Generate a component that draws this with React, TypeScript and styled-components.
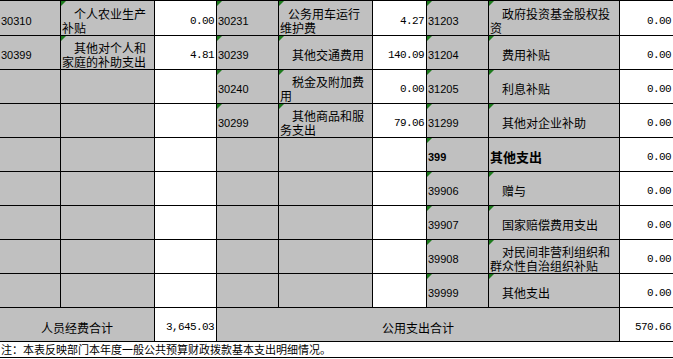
import React from 'react';
import styled, { createGlobalStyle, css } from 'styled-components';

const GlobalStyle = createGlobalStyle`
  html, body { margin: 0; padding: 0; background: #ffffff; }
  body { font-family: "Noto Sans CJK SC", sans-serif; color: #000; }
`;

const Sheet = styled.div`
  display: grid;
  grid-template-columns: 60px 93px 61px 61px 93px 53px 61px 130px 53px;
  grid-template-rows: 34px repeat(9, 33px) 15px;
  gap: 1px;
  padding: 1px 0;
  background: #000;
  width: 673px;
  overflow: hidden;
`;

const flagStyle = css`
  &::before {
    content: '';
    position: absolute;
    left: 0;
    top: 0;
    border-top: 5px solid #1d7a1d;
    border-right: 5px solid transparent;
  }
`;

const Cell = styled.div<{ $flag?: boolean }>`
  position: relative;
  box-sizing: border-box;
  display: flex;
  align-items: center;
  padding-top: 5px;
  overflow: hidden;
  ${(p) => p.$flag && flagStyle}
`;

const CodeCell = styled(Cell)<{ $bold?: boolean }>`
  background: #c0c0c0;
  padding-left: 1px;
  font-family: "Liberation Sans", Arial, sans-serif;
  font-size: 11px;
  font-weight: ${(p) => (p.$bold ? 700 : 400)};
`;

const NameCell = styled(Cell)<{ $bold?: boolean }>`
  background: #c0c0c0;
  padding-left: 1px;
  padding-right: 2px;
  font-family: "Noto Sans CJK SC", sans-serif;
  font-size: ${(p) => (p.$bold ? 13 : 12)}px;
  font-weight: ${(p) => (p.$bold ? 700 : 400)};
  line-height: 14px;
`;

const NameText = styled.span<{ $indent: number }>`
  display: block;
  width: 100%;
  text-indent: ${(p) => p.$indent}px;
`;

const AmountCell = styled(Cell)`
  background: #ffffff;
  justify-content: flex-end;
  padding-right: 2px;
  font-family: "Liberation Mono", "Courier New", monospace;
  font-size: 11px;
  letter-spacing: -0.6px;
`;

const BlankCell = styled(Cell)<{ $white?: boolean }>`
  background: ${(p) => (p.$white ? '#ffffff' : '#c0c0c0')};
`;

const TotalLabel = styled(Cell)<{ $span: number }>`
  grid-column: span ${(p) => p.$span};
  background: #c0c0c0;
  justify-content: center;
  font-family: "Noto Sans CJK SC", sans-serif;
  font-size: 12px;
`;

const NoteCell = styled.div`
  grid-column: 1 / -1;
  background: #ffffff;
  padding-left: 1px;
  font-family: "Noto Sans CJK SC", sans-serif;
  font-size: 11px;
  line-height: 15px;
  white-space: nowrap;
`;

type Item = {
  code?: string;
  name?: string;
  amount?: string;
  codeFlag?: boolean;
  nameFlag?: boolean;
  indent?: number;
  bold?: boolean;
};

const rows: Item[][] = [
  [
    { code: '30310', name: '个人农业生产补贴', amount: '0.00', nameFlag: true },
    { code: '30231', name: '公务用车运行维护费', amount: '4.27', codeFlag: true, nameFlag: true, indent: 8 },
    { code: '31203', name: '政府投资基金股权投资', amount: '0.00', codeFlag: true, nameFlag: true },
  ],
  [
    { code: '30399', name: '其他对个人和家庭的补助支出', amount: '4.81', nameFlag: true },
    { code: '30239', name: '其他交通费用', amount: '140.09', codeFlag: true, nameFlag: true },
    { code: '31204', name: '费用补贴', amount: '0.00', codeFlag: true, nameFlag: true },
  ],
  [
    {},
    { code: '30240', name: '税金及附加费用', amount: '0.00', codeFlag: true, nameFlag: true },
    { code: '31205', name: '利息补贴', amount: '0.00', codeFlag: true, nameFlag: true },
  ],
  [
    {},
    { code: '30299', name: '其他商品和服务支出', amount: '79.06', codeFlag: true, nameFlag: true },
    { code: '31299', name: '其他对企业补助', amount: '0.00', codeFlag: true, nameFlag: true },
  ],
  [{}, {}, { code: '399', name: '其他支出', amount: '0.00', codeFlag: true, bold: true, indent: 0 }],
  [{}, {}, { code: '39906', name: '赠与', amount: '0.00', codeFlag: true, nameFlag: true }],
  [{}, {}, { code: '39907', name: '国家赔偿费用支出', amount: '0.00', codeFlag: true, nameFlag: true }],
  [{}, {}, { code: '39908', name: '对民间非营利组织和群众性自治组织补贴', amount: '0.00', codeFlag: true, nameFlag: true }],
  [{}, {}, { code: '39999', name: '其他支出', amount: '0.00', codeFlag: true, nameFlag: true }],
];

function Group({ item }: { item: Item }) {
  if (!item.code) {
    return (
      <>
        <BlankCell />
        <BlankCell />
        <BlankCell $white />
      </>
    );
  }
  return (
    <>
      <CodeCell $flag={item.codeFlag} $bold={item.bold}>
        {item.code}
      </CodeCell>
      <NameCell $flag={item.nameFlag} $bold={item.bold}>
        <NameText $indent={item.indent ?? 12}>{item.name}</NameText>
      </NameCell>
      <AmountCell>{item.amount}</AmountCell>
    </>
  );
}

export default function App() {
  return (
    <>
      <GlobalStyle />
      <Sheet>
        {rows.map((row, i) => (
          <React.Fragment key={i}>
            {row.map((item, j) => (
              <Group key={j} item={item} />
            ))}
          </React.Fragment>
        ))}
        <TotalLabel $span={2}>人员经费合计</TotalLabel>
        <AmountCell>3,645.03</AmountCell>
        <TotalLabel $span={5}>公用支出合计</TotalLabel>
        <AmountCell>570.66</AmountCell>
        <NoteCell>注：本表反映部门本年度一般公共预算财政拨款基本支出明细情况。</NoteCell>
      </Sheet>
    </>
  );
}
